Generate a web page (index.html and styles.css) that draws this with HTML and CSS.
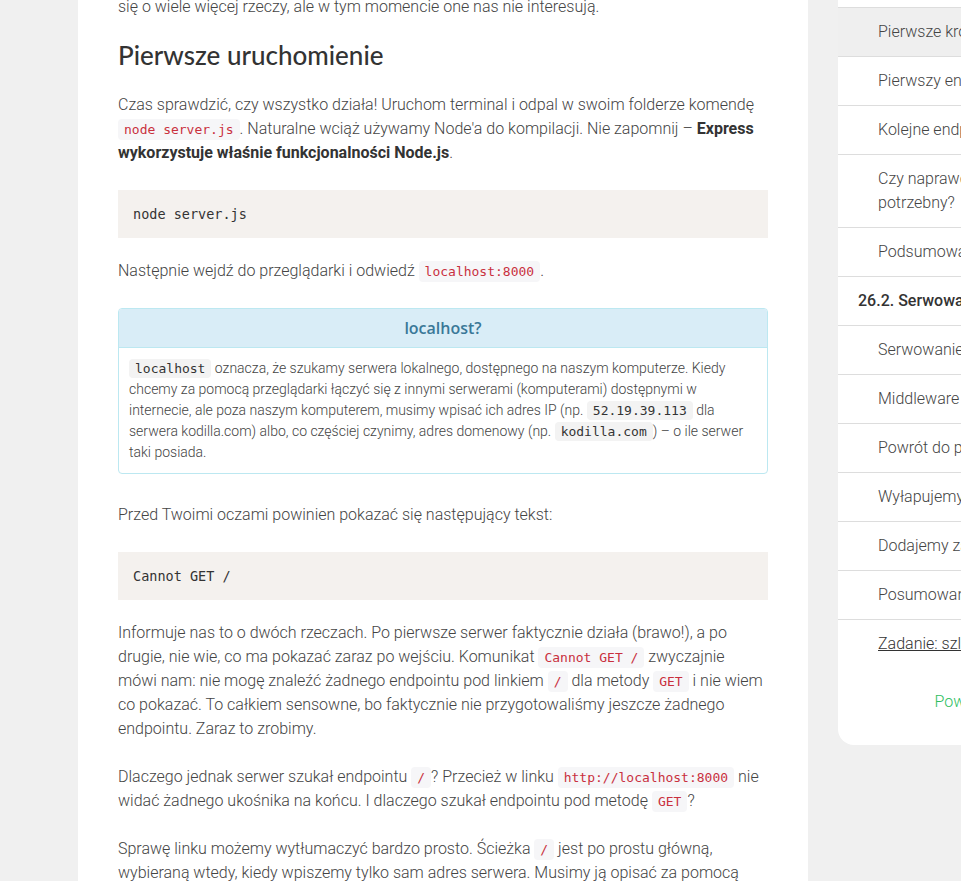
FILE: index.html
```html
<!DOCTYPE html>
<html lang="pl">
<head>
<meta charset="utf-8">
<title>Pierwsze uruchomienie</title>
<link rel="stylesheet" href="styles.css">
</head>
<body>
<div class="page">
  <main class="article">
    <p class="lead-in">się o wiele więcej rzeczy, ale w tym momencie one nas nie interesują.</p>
    <h2 class="title">Pierwsze uruchomienie</h2>
    <p>Czas sprawdzić, czy wszystko działa! Uruchom terminal i odpal w swoim folderze komendę <code class="ic">node server.js</code>. Naturalne wciąż używamy Node'a do kompilacji. Nie zapomnij – <strong>Express wykorzystuje właśnie funkcjonalności Node.js</strong>.</p>
    <pre class="block">node server.js</pre>
    <p>Następnie wejdź do przeglądarki i odwiedź <code class="ic">localhost:8000</code>.</p>
    <section class="panel">
      <div class="panel-head">localhost?</div>
      <div class="panel-body"><code class="ic dark">localhost</code> oznacza, że szukamy serwera lokalnego, dostępnego na naszym komputerze. Kiedy chcemy za pomocą przeglądarki łączyć się z innymi serwerami (komputerami) dostępnymi w internecie, ale poza naszym komputerem, musimy wpisać ich adres IP (np. <code class="ic dark">52.19.39.113</code> dla serwera kodilla.com) albo, co częściej czynimy, adres domenowy (np. <code class="ic dark">kodilla.com</code>) – o ile serwer taki posiada.</div>
    </section>
    <p>Przed Twoimi oczami powinien pokazać się następujący tekst:</p>
    <pre class="block">Cannot GET /</pre>
    <p>Informuje nas to o dwóch rzeczach. Po pierwsze serwer faktycznie działa (brawo!), a po drugie, nie wie, co ma pokazać zaraz po wejściu. Komunikat <code class="ic">Cannot GET /</code> zwyczajnie mówi nam: nie mogę znaleźć żadnego endpointu pod linkiem <code class="ic">/</code> dla metody <code class="ic">GET</code> i nie wiem co pokazać. To całkiem sensowne, bo faktycznie nie przygotowaliśmy jeszcze żadnego endpointu. Zaraz to zrobimy.</p>
    <p>Dlaczego jednak serwer szukał endpointu <code class="ic">/</code>? Przecież w linku <code class="ic">http://localhost:8000</code> nie widać żadnego ukośnika na końcu. I dlaczego szukał endpointu pod metodę <code class="ic">GET</code>?</p>
    <p>Sprawę linku możemy wytłumaczyć bardzo prosto. Ścieżka <code class="ic">/</code> jest po prostu główną, wybieraną wtedy, kiedy wpiszemy tylko sam adres serwera. Musimy ją opisać za pomocą endpointu, tak jak każdą inną ścieżkę.</p>
  </main>
  <aside class="sidebar">
    <ul class="toc">
      <li class="toc-item">Instalacja Express</li>
      <li class="toc-item active">Pierwsze kroki</li>
      <li class="toc-item">Pierwszy endpoint</li>
      <li class="toc-item">Kolejne endpointy</li>
      <li class="toc-item">Czy naprawdę Express jest potrzebny?</li>
      <li class="toc-item">Podsumowanie</li>
      <li class="toc-section">26.2. Serwowanie plików</li>
      <li class="toc-item">Serwowanie plików</li>
      <li class="toc-item">Middleware</li>
      <li class="toc-item">Powrót do projektu</li>
      <li class="toc-item">Wyłapujemy błędy</li>
      <li class="toc-item">Dodajemy zadania</li>
      <li class="toc-item">Posumowanie</li>
      <li class="toc-item task"><a class="task-link" href="#">Zadanie: szlifujemy aplikację</a></li>
    </ul>
    <div class="back"><a class="back-link" href="#">Powrót do góry</a></div>
  </aside>
</div>
</body>
</html>
```

FILE: styles.css
```css
html, body {
  margin: 0;
  height: 100%;
  overflow: hidden;
}
body {
  background: #f0f0f0;
  font-family: Roboto, "Liberation Sans", sans-serif;
  font-weight: 300;
  font-size: 16px;
  color: #444;
}
.page {
  display: flex;
  align-items: flex-start;
  gap: 30px;
  padding-left: 78px;
  width: 1200px;
}
.article {
  flex: 0 0 730px;
  box-sizing: border-box;
  background: #fff;
  padding: 0 40px 40px;
  margin-top: -5px;
  line-height: 24px;
}
.article p {
  margin: 0 0 24px;
  padding-right: 4px;
}
.article strong {
  font-weight: 700;
  color: #333;
}
.title {
  font-family: Lato, "Open Sans", sans-serif;
  font-weight: 500;
  font-size: 26px;
  line-height: 24px;
  color: #333;
  margin: 24px 0 26px;
}
.ic {
  font-family: "DejaVu Sans Mono", monospace;
  font-size: 13px;
  line-height: 16px;
  color: #c9303e;
  background: #f6f6f8;
  padding: 3px 6px;
  border-radius: 4px;
}
.ic.dark {
  color: #333;
  background: #f3f3f3;
}
.block {
  margin: 25px 0 21px;
  padding: 12px 15px;
  background: #f4f1ee;
  font-family: "DejaVu Sans Mono", monospace;
  font-size: 13.5px;
  line-height: 24px;
  color: #333;
}
.panel {
  margin: 25px 0 29px;
  border: 1px solid #bce8f1;
  border-radius: 4px;
  overflow: hidden;
}
.panel-head {
  background: #d9edf7;
  border-bottom: 1px solid #bce8f1;
  color: #3a7898;
  text-align: center;
  font-family: "Open Sans", Lato, sans-serif;
  font-weight: 600;
  font-size: 16px;
  line-height: 38px;
}
.panel-body {
  padding: 10px;
  font-size: 14px;
  line-height: 21px;
}
.panel-body .ic {
  padding: 2px 6px;
}
.sidebar {
  flex: 0 0 300px;
  background: #fff;
  border-radius: 0 0 16px 16px;
  margin-top: -42px;
  padding-bottom: 31px;
}
.toc {
  list-style: none;
  margin: 0;
  padding: 0;
}
.toc-item, .toc-section {
  border-top: 1px solid #ddd;
  padding: 12px 20px 12px 40px;
  line-height: 24px;
}
.toc-item.active {
  background: #efefef;
}
.toc-section {
  padding-left: 20px;
  font-weight: 500;
  color: #333;
}
.task-link {
  color: #333;
  text-decoration: underline;
}
.back {
  margin-top: 22px;
  text-align: center;
  line-height: 24px;
}
.back-link {
  color: #2dbe60;
  text-decoration: none;
}
```
